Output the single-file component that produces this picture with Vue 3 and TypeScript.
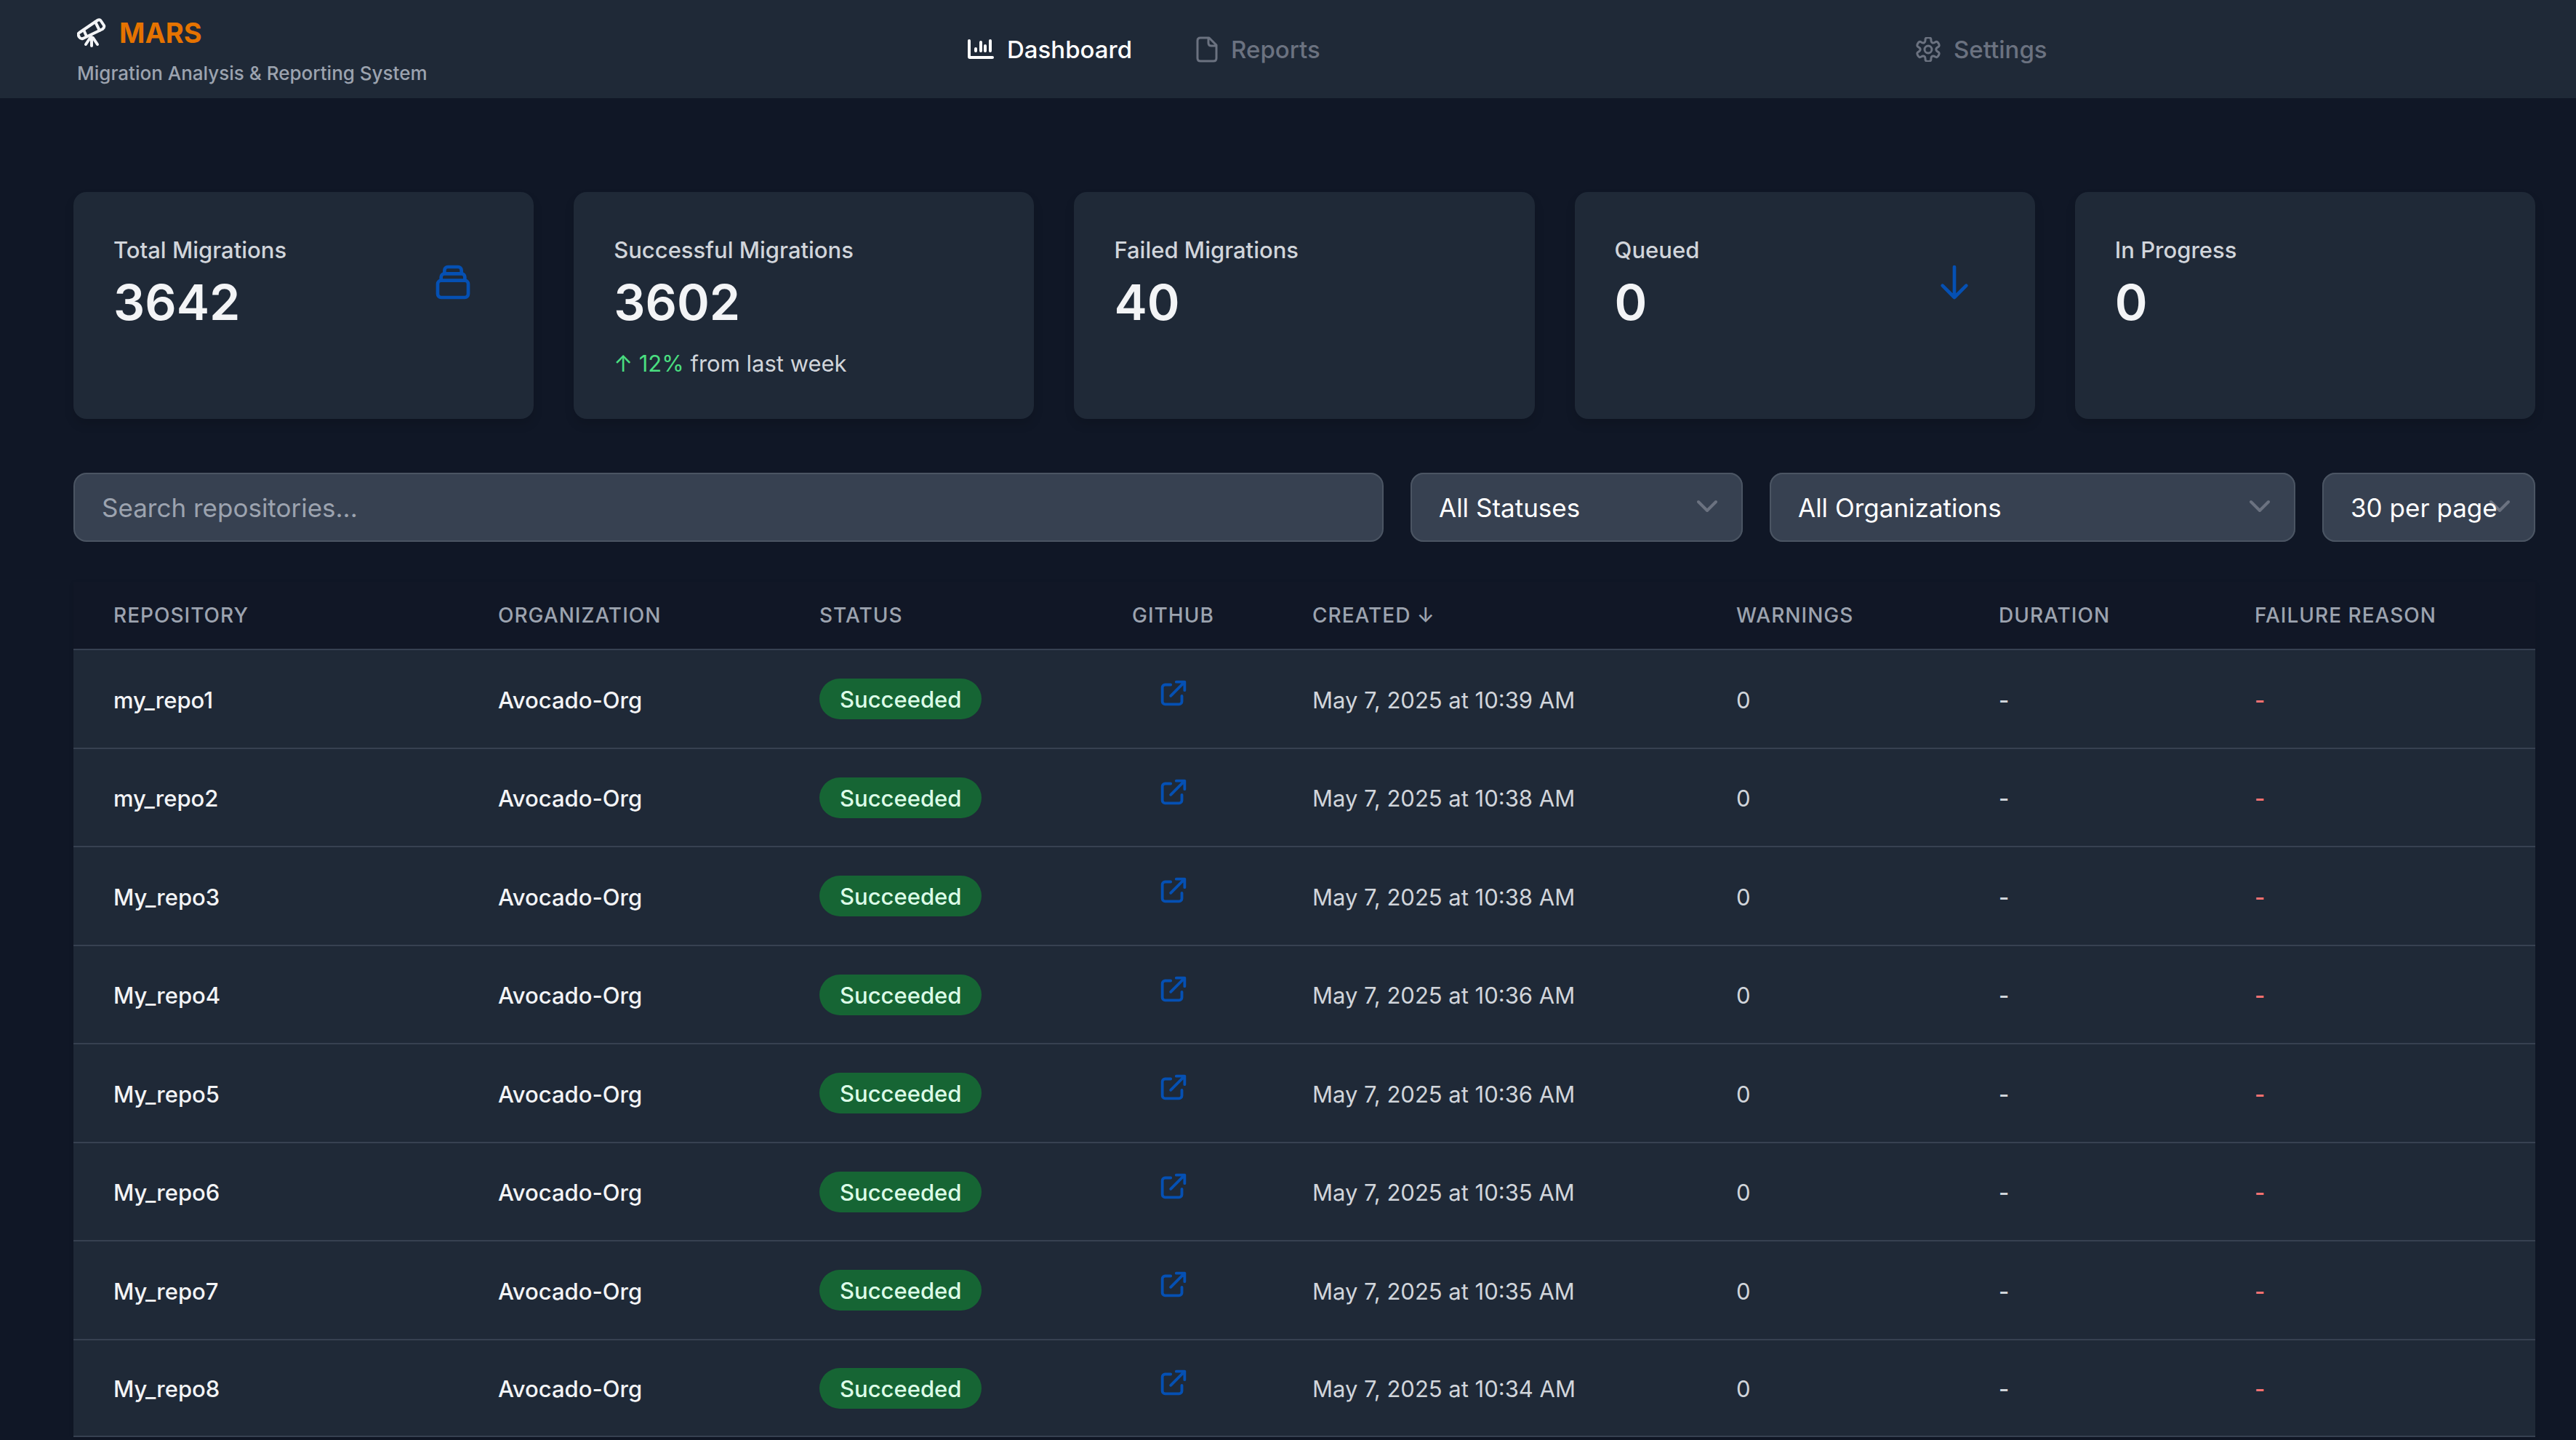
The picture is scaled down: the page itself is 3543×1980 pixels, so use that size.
<script setup lang="ts">
import { ref } from 'vue'

type StatIcon = 'collection' | 'arrow-down' | null

interface Stat {
  label: string
  value: number
  change?: string
  icon: StatIcon
}

interface Migration {
  repository: string
  organization: string
  status: string
  created: string
  warnings: number
  duration: string
  failureReason: string
}

const stats: Stat[] = [
  { label: 'Total Migrations', value: 3642, icon: 'collection' },
  { label: 'Successful Migrations', value: 3602, change: '12%', icon: null },
  { label: 'Failed Migrations', value: 40, icon: null },
  { label: 'Queued', value: 0, icon: 'arrow-down' },
  { label: 'In Progress', value: 0, icon: null },
]

const rows: [string, string][] = [
  ['my_repo1', '10:39 AM'],
  ['my_repo2', '10:38 AM'],
  ['My_repo3', '10:38 AM'],
  ['My_repo4', '10:36 AM'],
  ['My_repo5', '10:36 AM'],
  ['My_repo6', '10:35 AM'],
  ['My_repo7', '10:35 AM'],
  ['My_repo8', '10:34 AM'],
]

const migrations: Migration[] = rows.map(([repository, time]) => ({
  repository,
  organization: 'Avocado-Org',
  status: 'Succeeded',
  created: `May 7, 2025 at ${time}`,
  warnings: 0,
  duration: '-',
  failureReason: '-',
}))

const search = ref('')
const status = ref('all')
const organization = ref('all')
const pageSize = ref('30')

// Closed outline of a six-toothed gear, smoothed through the midpoints of its corners.
function gearPath(cx: number, cy: number, outer: number, inner: number): string {
  const points: [number, number][] = []
  for (let tooth = 0; tooth < 6; tooth++) {
    const base = tooth * 60 - 90
    const corners: [number, number][] = [[-14, outer], [14, outer], [20, inner], [40, inner]]
    for (const [offset, radius] of corners) {
      const angle = ((base + offset) * Math.PI) / 180
      points.push([cx + radius * Math.cos(angle), cy + radius * Math.sin(angle)])
    }
  }
  const mid = (a: [number, number], b: [number, number]) =>
    `${((a[0] + b[0]) / 2).toFixed(2)} ${((a[1] + b[1]) / 2).toFixed(2)}`
  let d = `M${mid(points[points.length - 1], points[0])}`
  points.forEach((p, i) => {
    d += `Q${p[0].toFixed(2)} ${p[1].toFixed(2)} ${mid(p, points[(i + 1) % points.length])}`
  })
  return d + 'Z'
}
const gear = gearPath(17, 17, 17, 11)
</script>

<template>
  <div class="app">
    <header class="topbar">
      <div class="brand">
        <a class="brand-name" href="#">
          <svg class="telescope" viewBox="0 0 40 40" aria-hidden="true">
            <path d="M3 20 28 3Q31 1 33 4L37 10Q38 13 35 15L8 28Q5 29 3 26L2 24Q1 21 3 20Z" />
            <path d="M9 16 13 25M25 5 31 17M20 26V38M18 27 12 36M22 27 28 36" />
          </svg>
          <span>MARS</span>
        </a>
        <p class="tagline">Migration Analysis &amp; Reporting System</p>
      </div>
      <nav class="nav">
        <a class="nav-link active" href="#dashboard">
          <svg class="nav-icon" viewBox="0 0 36 36" aria-hidden="true">
            <path class="axis" d="M2 6V28Q2 29 3 29H34" />
            <path class="bars" d="M11 17V20M18 8V20M24 13V20M31 6V20" />
          </svg>
          Dashboard
        </a>
        <a class="nav-link reports" href="#reports">
          <svg class="nav-icon file" viewBox="0 0 30 36" aria-hidden="true">
            <path d="M6 2H18L28 12V30Q28 34 24 34H6Q2 34 2 30V6Q2 2 6 2ZM17 2V9Q17 13 21 13H28" />
          </svg>
          Reports
        </a>
      </nav>
      <a class="nav-link settings" href="#settings">
        <svg class="nav-icon gear" viewBox="0 0 34 34" aria-hidden="true">
          <path :d="gear" />
          <circle cx="17" cy="17" r="5" />
        </svg>
        Settings
      </a>
    </header>

    <main class="content">
      <section class="stats" aria-label="Migration statistics">
        <article v-for="stat in stats" :key="stat.label" class="card">
          <div class="card-main">
            <div>
              <h2 class="card-label">{{ stat.label }}</h2>
              <p class="card-value">{{ stat.value }}</p>
            </div>
            <svg v-if="stat.icon" class="card-icon" viewBox="0 0 24 24" aria-hidden="true">
              <path
                v-if="stat.icon === 'collection'"
                d="M19 11H5m14 0a2 2 0 012 2v6a2 2 0 01-2 2H5a2 2 0 01-2-2v-6a2 2 0 012-2m14 0V9a2 2 0 00-2-2M5 11V9a2 2 0 012-2m0 0V5a2 2 0 012-2h6a2 2 0 012 2v2M7 7h10"
              />
              <path v-else d="M19 14l-7 7m0 0l-7-7m7 7V3" />
            </svg>
          </div>
          <p v-if="stat.change" class="card-change">
            <span class="up">↑ {{ stat.change }}</span> from last week
          </p>
        </article>
      </section>

      <form class="filters" @submit.prevent>
        <input
          v-model="search"
          class="field"
          type="text"
          placeholder="Search repositories..."
          aria-label="Search repositories"
        />
        <div class="field-wrap">
          <svg class="chevron" viewBox="0 0 28 18" aria-hidden="true"><path d="M2 3 14 15 26 3" /></svg>
          <select v-model="status" class="field select" aria-label="Status">
            <option value="all">All Statuses</option>
            <option value="succeeded">Succeeded</option>
          </select>
        </div>
        <div class="field-wrap">
          <svg class="chevron" viewBox="0 0 28 18" aria-hidden="true"><path d="M2 3 14 15 26 3" /></svg>
          <select v-model="organization" class="field select" aria-label="Organization">
            <option value="all">All Organizations</option>
            <option value="avocado">Avocado-Org</option>
          </select>
        </div>
        <div class="field-wrap">
          <svg class="chevron" viewBox="0 0 28 18" aria-hidden="true"><path d="M2 3 14 15 26 3" /></svg>
          <select v-model="pageSize" class="field select" aria-label="Rows per page">
            <option value="30">30 per page</option>
          </select>
        </div>
      </form>

      <table class="migrations">
        <colgroup>
          <col class="c-repo" />
          <col class="c-org" />
          <col class="c-status" />
          <col class="c-github" />
          <col class="c-created" />
          <col class="c-warnings" />
          <col class="c-duration" />
          <col class="c-failure" />
        </colgroup>
        <thead>
          <tr>
            <th scope="col">Repository</th>
            <th scope="col">Organization</th>
            <th scope="col">Status</th>
            <th scope="col">GitHub</th>
            <th scope="col" aria-sort="descending"><button class="sort" type="button">Created ↓</button></th>
            <th scope="col">Warnings</th>
            <th scope="col">Duration</th>
            <th scope="col">Failure Reason</th>
          </tr>
        </thead>
        <tbody>
          <tr v-for="row in migrations" :key="row.repository">
            <td class="repo">{{ row.repository }}</td>
            <td class="org">{{ row.organization }}</td>
            <td class="status"><span class="badge">{{ row.status }}</span></td>
            <td class="github">
              <a class="external" href="#" :aria-label="`Open ${row.repository} on GitHub`">
                <svg viewBox="0 0 24 24" aria-hidden="true">
                  <path d="M10 6H6a2 2 0 00-2 2v10a2 2 0 002 2h10a2 2 0 002-2v-4M14 4h6m0 0v6m0-6L10 14" />
                </svg>
              </a>
            </td>
            <td>{{ row.created }}</td>
            <td>{{ row.warnings }}</td>
            <td class="dash">{{ row.duration }}</td>
            <td class="dash failure">{{ row.failureReason }}</td>
          </tr>
        </tbody>
      </table>
    </main>
  </div>
</template>

<style>
html,
body {
  background: #101726;
}
body {
  margin: 0;
}
</style>

<style scoped>
.app {
  height: 100vh;
  overflow: hidden;
  background: #101726;
  color: #d1d5db;
  font-family: Inter, "Liberation Sans", sans-serif;
}

h2,
p {
  margin: 0;
}

svg {
  display: block;
  flex: none;
  fill: none;
  stroke: currentColor;
  stroke-linecap: round;
  stroke-linejoin: round;
}

a {
  color: inherit;
  text-decoration: none;
}

/* Top bar */
.topbar {
  display: grid;
  grid-template-columns: 1225fr 1304fr 802fr;
  align-items: center;
  box-sizing: border-box;
  height: 135px;
  padding: 0 106px;
  background: #1f2937;
}

.brand {
  padding-top: 10px;
}

.brand-name {
  display: flex;
  align-items: center;
  gap: 18px;
  height: 56px;
  color: #e57300;
  font-size: 38px;
  font-weight: 700;
  line-height: 56px;
}

.telescope {
  width: 40px;
  height: 40px;
  color: #f3f4f6;
  stroke-width: 4;
}

.tagline {
  color: #9ca3af;
  font-size: 26px;
  font-weight: 500;
  line-height: 56px;
}

.nav {
  display: flex;
  align-items: center;
  gap: 88px;
}

.nav-link {
  display: flex;
  align-items: center;
  gap: 18px;
  color: #6b7280;
  font-size: 33px;
  font-weight: 500;
  line-height: 46px;
}

.nav-link.active {
  color: #ffffff;
}

.nav-icon {
  width: 36px;
  height: 36px;
  stroke-width: 3;
}

.nav-icon.file {
  width: 30px;
}

.nav-icon.gear {
  width: 34px;
  height: 34px;
}

.axis,
.bars {
  stroke-width: 4;
}

/* Content */
.content {
  padding: 129px 56px 0 101px;
}

.stats {
  display: grid;
  grid-template-columns: repeat(5, 1fr);
  gap: 55px;
}

.card {
  display: flex;
  flex-direction: column;
  gap: 20px;
  box-sizing: border-box;
  height: 312px;
  padding: 55px;
  border-radius: 18px;
  background: #1f2937;
  box-shadow: 0 8px 14px rgba(0, 0, 0, 0.12);
}

.card-main {
  display: flex;
  align-items: center;
  justify-content: space-between;
}

.card-label {
  padding-top: 2px;
  margin-bottom: 7px;
  font-size: 31px;
  font-weight: 500;
  line-height: 46px;
}

.card-value {
  color: #f3f4f6;
  font-size: 68px;
  font-weight: 600;
  line-height: 83px;
}

.card-icon {
  width: 56px;
  height: 56px;
  margin-right: 28px;
  color: #0550b3;
  stroke-width: 2;
}

.card-change {
  font-size: 31px;
  line-height: 46px;
}

.up {
  color: #4ade80;
}

/* Filters */
.filters {
  display: grid;
  grid-template-columns: 1fr 457px 723px 293px;
  gap: 37px;
  margin-top: 74px;
}

.field-wrap {
  position: relative;
  border-radius: 18px;
  background: #374151;
}

.field {
  display: block;
  box-sizing: border-box;
  width: 100%;
  height: 95px;
  margin: 0;
  padding: 0 37px;
  border: 2px solid #4b5563;
  border-radius: 18px;
  outline: none;
  background: #374151;
  color: #ffffff;
  font-family: inherit;
  font-size: 35px;
}

.field::placeholder {
  color: #9ca3af;
  opacity: 1;
}

.select {
  position: relative;
  padding-right: 0;
  appearance: none;
  background: transparent;
}

.chevron {
  position: absolute;
  top: 37px;
  right: 35px;
  width: 28px;
  height: 18px;
  color: #6b7280;
  stroke-width: 4;
}

/* Table */
.migrations {
  width: 100%;
  margin-top: 55px;
  table-layout: fixed;
  border-spacing: 0;
  font-size: 31px;
  line-height: 46px;
  box-shadow: 0 2px 6px rgba(0, 0, 0, 0.12);
}

.c-repo { width: 529px; }
.c-org { width: 442px; }
.c-status { width: 430px; }
.c-github { width: 248px; }
.c-created { width: 583px; }
.c-warnings { width: 361px; }
.c-duration { width: 352px; }

th {
  height: 92px;
  padding: 0 0 0 55px;
  background: #111726;
  color: #9ca3af;
  font-size: 28px;
  font-weight: 500;
  letter-spacing: 1px;
  line-height: 37px;
  text-align: left;
  text-transform: uppercase;
}

.sort {
  padding: 0;
  border: 0;
  background: none;
  color: inherit;
  font: inherit;
  letter-spacing: inherit;
  text-transform: inherit;
}

td {
  box-sizing: border-box;
  height: 135px;
  padding: 3px 0 0 55px;
  border-top: 2px solid #374151;
  background: #1f2937;
  white-space: nowrap;
}

tr:nth-child(odd) td {
  height: 136px;
}

tr:last-child td {
  border-bottom: 2px solid #374151;
}

.repo,
.org {
  color: #f3f4f6;
  font-weight: 500;
}

.dash {
  font-weight: 500;
}

.status {
  padding-top: 0;
}

.badge {
  display: inline-block;
  padding: 6px 28px 4px;
  border-radius: 28px;
  background: #166534;
  color: #dcfce7;
  font-weight: 500;
}

.github {
  padding: 0 0 16px 89px;
}

.external {
  display: block;
  width: 46px;
  color: #0550b3;
}

.external svg {
  width: 46px;
  height: 46px;
  stroke-width: 2;
}

.failure {
  color: #f87171;
}
</style>
